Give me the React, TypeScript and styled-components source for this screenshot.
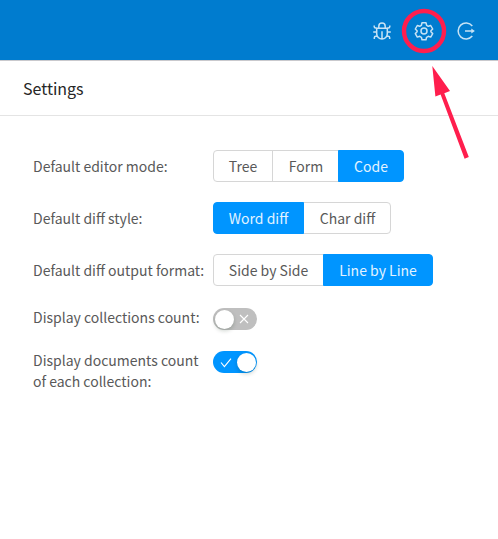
import React from "react";
import styled, { createGlobalStyle } from "styled-components";

const Global = createGlobalStyle`
  * { box-sizing: border-box; }
  body {
    margin: 0;
    background: #fff;
    color: #595959;
    font-family: "Noto Sans CJK SC", "Noto Sans", sans-serif;
    font-size: 14px;
    line-height: 21px;
  }
`;

const Page = styled.div`
  position: relative;
  display: flex;
  flex-direction: column;
  height: 539px;
  overflow: hidden;
`;

const TopBar = styled.header`
  display: flex;
  flex: none;
  align-items: center;
  justify-content: flex-end;
  gap: 22px;
  height: 61px;
  padding: 1px 22px 0 0;
  background: #007ccf;
  border-bottom: 1px solid #c9c9cd;
`;

const BarIcon = styled.svg`
  width: 20px;
  height: 20px;
  fill: none;
  stroke: #c7e3f5;
  stroke-width: 1.5;
`;

const Heading = styled.h1`
  flex: none;
  height: 55px;
  margin: 0;
  padding-left: 23px;
  border-bottom: 1px solid #e4e4e4;
  color: #262626;
  font-size: 16px;
  font-weight: 400;
  line-height: 54px;
`;

const Form = styled.main`
  display: flex;
  flex-direction: column;
  padding: 34px 33px;
`;

const Row = styled.div<{ $gap: number }>`
  display: grid;
  grid-template-columns: 180px 1fr;
  align-items: start;
  margin-bottom: ${(p) => p.$gap}px;
`;

const Label = styled.div<{ $top?: number }>`
  padding-top: ${(p) => p.$top ?? 0}px;
  white-space: pre-line;
`;

const Group = styled.div`
  display: flex;
  height: 32px;
`;

const Option = styled.button<{ $active: boolean; $width: number }>`
  width: ${(p) => p.$width}px;
  margin: 0 0 0 -1px;
  padding: 0 0 0 ${(p) => (p.$active ? 0 : 1)}px;
  border: 1px solid ${(p) => (p.$active ? "#0095ff" : "#d6d6d6")};
  background: ${(p) => (p.$active ? "#0095ff" : "#fff")};
  color: ${(p) => (p.$active ? "#e3f3ff" : "#595959")};
  font: inherit;
  line-height: 30px;
  white-space: nowrap;
  z-index: ${(p) => (p.$active ? 1 : 0)};
  &:first-child { margin-left: 0; padding-left: 0; border-radius: 4px 0 0 4px; }
  &:last-child { border-radius: 0 4px 4px 0; }
`;

const Switch = styled.button<{ $on: boolean }>`
  display: flex;
  flex-direction: ${(p) => (p.$on ? "row-reverse" : "row")};
  align-items: center;
  justify-content: space-between;
  width: 44px;
  height: 22px;
  margin: 1px 0 0;
  padding: 0 1.5px;
  border: 0;
  border-radius: 11px;
  background: ${(p) => (p.$on ? "#0095ff" : "#bfbfbf")};
`;

const Knob = styled.span`
  width: 19px;
  height: 19px;
  border-radius: 50%;
  background: #fff;
  box-shadow: 0 2px 4px rgba(0, 35, 11, 0.2);
`;

const Mark = styled.svg<{ $on: boolean }>`
  width: 12px;
  height: 12px;
  margin: ${(p) => (p.$on ? "2px 0 0 5px" : "0 6px 0 0")};
  fill: none;
  stroke: #fff;
  stroke-width: 1.1;
`;

const Annotation = styled.svg`
  position: absolute;
  top: 0;
  right: 0;
  width: 98px;
  height: 165px;
  pointer-events: none;
`;

interface Choice {
  text: string;
  width: number;
}

const choices: { label: string; active: number; options: Choice[] }[] = [
  {
    label: "Default editor mode:",
    active: 2,
    options: [{ text: "Tree", width: 60 }, { text: "Form", width: 67 }, { text: "Code", width: 66 }],
  },
  {
    label: "Default diff style:",
    active: 0,
    options: [{ text: "Word diff", width: 91 }, { text: "Char diff", width: 88 }],
  },
  {
    label: "Default diff output format:",
    active: 1,
    options: [{ text: "Side by Side", width: 111 }, { text: "Line by Line", width: 110 }],
  },
];

const toggles = [
  { label: "Display collections count:", on: false },
  { label: "Display documents count\nof each collection:", on: true },
];

export default function App() {
  return (
    <Page>
      <Global />
      <TopBar>
        <BarIcon viewBox="0 0 20 20">
          <path d="M4.7 7.2h10.6v5.6a5.3 5.3 0 0 1-10.6 0zM6.8 7V5.2a3.2 3.2 0 0 1 6.4 0V7M10 10.3v7.5M2.2 4.4v1.2q0 1.5 1.5 1.5h1M17.8 4.4v1.2q0 1.5-1.5 1.5h-1M1.2 11h3.5M15.3 11h3.5M2.3 18v-1.3q0-1.5 1.5-1.5h1.5M17.7 18v-1.3q0-1.5-1.5-1.5h-1.5" />
        </BarIcon>
        <BarIcon viewBox="0 0 20 20">
          <path d="M8 1.8h4l.6 2.5 1.7 1 2.4-.8 2 3.5-1.8 1.8v1l1.8 1.8-2 3.5-2.4-.8-1.7 1-.6 2.5H8l-.6-2.5-1.7-1-2.4.8-2-3.5L3.1 10.8v-1L1.3 8l2-3.5 2.4.8 1.7-1z" strokeLinejoin="round" />
          <circle cx="10" cy="10" r="3" />
        </BarIcon>
        <BarIcon viewBox="0 0 20 20">
          <path d="M16.3 4.9a8 8 0 1 0 0 10.2" />
          <path d="M9 10h7" />
          <path d="M15.3 7.5l3.6 2.5-3.6 2.5z" fill="#c7e3f5" stroke="none" />
        </BarIcon>
      </TopBar>
      <Heading>Settings</Heading>
      <Form>
        {choices.map((c, i) => (
          <Row key={c.label} $gap={i === 2 ? 21 : 20}>
            <Label $top={6}>{c.label}</Label>
            <Group>
              {c.options.map((o, j) => (
                <Option key={o.text} $active={j === c.active} $width={o.width}>{o.text}</Option>
              ))}
            </Group>
          </Row>
        ))}
        {toggles.map((t) => (
          <Row key={t.label} $gap={20}>
            <Label>{t.label}</Label>
            <Switch $on={t.on} role="switch" aria-checked={t.on} aria-label={t.label}>
              <Knob />
              <Mark $on={t.on} viewBox="0 0 12 12">
                <path d={t.on ? "M1 5.5l3.4 4.2L11 1.6" : "M2 2l8 8M10 2l-8 8"} />
              </Mark>
            </Switch>
          </Row>
        ))}
      </Form>
      <Annotation viewBox="400 0 98 165">
        <circle cx="424" cy="31" r="20" fill="none" stroke="#ff1e4d" strokeWidth="4.4" />
        <path d="M432.3 66L450 91l-5.7 2.2L468.8 157l-4.2 1.7L440.6 94.5l-5.2 2z" fill="#ff1e4d" />
      </Annotation>
    </Page>
  );
}
